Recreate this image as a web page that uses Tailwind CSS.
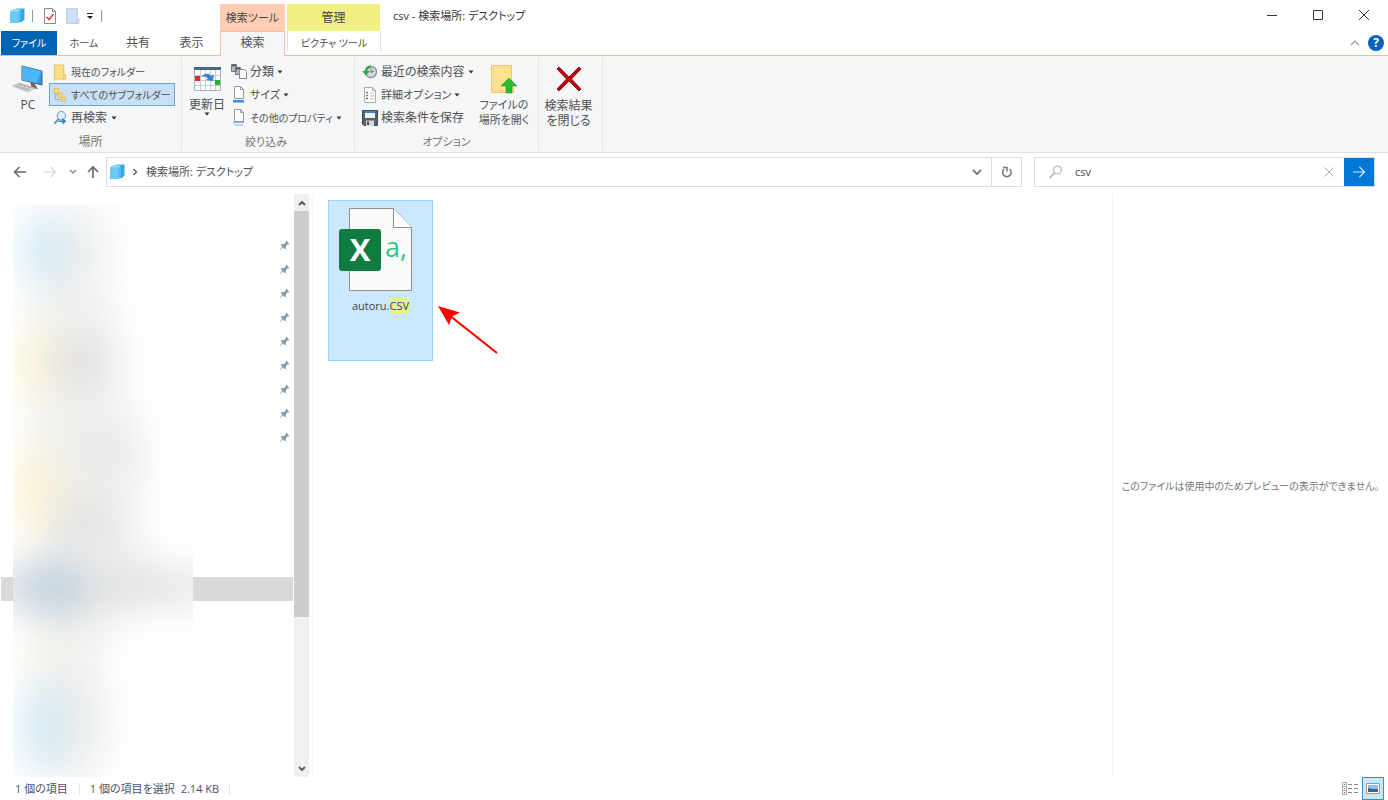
<!DOCTYPE html>
<html lang="ja">
<head>
<meta charset="utf-8">
<title>csv - 検索場所: デスクトップ</title>
<script src="https://cdn.jsdelivr.net/npm/@tailwindcss/browser@4"></script>
</head>
<body class="flex min-h-screen flex-col bg-white font-['Open_Sans','Noto_Sans_CJK_JP',sans-serif] text-[12px] leading-4 text-[#505050] [font-feature-settings:'palt'] whitespace-nowrap">
<svg width="0" height="0" class="absolute">
  <defs>
    <symbol id="stack" viewBox="0 0 16 16"><path d="M5 2 8 .5h7.500v11L13 14H5z" fill="#38a5dc"/><path d="M1 3.500 4 1.500h8v11L9.500 15H1z" fill="#4db8ec"/><path d="M1 3.500h8.500V15H1z" fill="#6cc8f5"/><path d="M1 3.500 4 1.500h8l-2.500 2z" fill="#9bdcfb"/></symbol>
    <symbol id="down" viewBox="0 0 6 4"><path d="M.5 .5h5L3 3.500z" fill="#333"/></symbol>
    <symbol id="pin" viewBox="0 0 12 12"><path d="M7 1.500 8 .8l3.200 3.200-.8.800-.9-.2-2.200 2.600.2 2.300-1 .7L4.400 8.100 1 11.200H.7v-.4L3.700 7.400 1.900 5.400l.8-1 2.200.2L7.300 2.600z" fill="#8a9ba9"/></symbol>
  </defs>
</svg>

<header class="shrink-0">
  <div class="flex h-[31px]">
    <div class="flex w-[220px] items-center pl-[9px]">
      <svg class="h-4 w-4"><use href="#stack"/></svg>
      <span class="ml-[7px] h-3 w-px bg-[#999]"></span>
      <button aria-label="プロパティ" class="ml-[11px]"><svg class="h-4 w-3" viewBox="0 0 12 16"><path d="M.5 .5h8l3 3v12H.5z" fill="#fff" stroke="#888"/><path d="M8.500 .5v3h3" fill="none" stroke="#888"/><path d="m2.500 9 2.500 2.500L9.500 6" fill="none" stroke="#e8402c" stroke-width="1.600"/></svg></button>
      <button aria-label="新しいフォルダー" class="ml-[10px]"><svg class="h-4 w-[14px]" viewBox="0 0 14 16"><path d="M.5 .5h11v9l1.500 1.500v4.500H.5z" fill="#d3dff2" stroke="#c2d0e6"/><path d="M10.500 11.500v4" stroke="#b5c5df"/></svg></button>
      <button aria-label="クイック アクセスのカスタマイズ" class="ml-[6px]"><svg class="h-2 w-2" viewBox="0 0 8 8"><path d="M1 1.500h6" stroke="#222"/><path d="M1 4h6L4 7z" fill="#222"/></svg></button>
      <span class="ml-[7px] h-3 w-px bg-[#999]"></span>
    </div>
    <div class="mt-1 mr-[2px] flex w-[65px] items-center justify-center bg-[#ffccb4] text-[11px] text-[#444]">検索ツール</div>
    <div class="mt-1 flex w-[93px] items-center justify-center bg-[#f0f082] text-[#444]">管理</div>
    <h1 class="ml-[13px] self-center text-[11px] text-[#333]">csv - 検索場所: デスクトップ</h1>
    <div class="ml-auto flex items-center gap-[34px] pr-[18px]">
      <button aria-label="最小化"><svg class="h-3 w-3" viewBox="0 0 12 12"><path d="M1 5.500h10" stroke="#333"/></svg></button>
      <button aria-label="最大化"><svg class="h-3 w-3" viewBox="0 0 12 12"><path d="M1.500 .5h9v9h-9z" fill="none" stroke="#333"/></svg></button>
      <button aria-label="閉じる"><svg class="h-3 w-3" viewBox="0 0 12 12"><path d="m1 0 10 10M11 0 1 10" stroke="#333"/></svg></button>
    </div>
  </div>
  <nav class="flex h-[25px] border-b border-[#f7b9a0] pl-px" aria-label="リボン タブ">
    <button class="h-6 w-14 bg-[#0063b1] text-[10px] text-white">ファイル</button>
    <button class="w-[54px] pb-px text-[10px]">ホーム</button>
    <button class="w-[54px] pb-px">共有</button>
    <button class="w-[53px] pb-px">表示</button>
    <button class="-mb-px ml-[2px] w-[65px] border-x border-t border-[#f7b9a0] bg-[#f5f6f7] pb-[2px]">検索</button>
    <button class="mb-1 ml-[2px] w-[94px] border-x border-[#ddd] pt-[3px] text-[10px]">ピクチャ ツール</button>
    <div class="ml-auto flex items-center gap-2 pr-1">
      <button aria-label="リボンの最小化"><svg class="h-2 w-[10px]" viewBox="0 0 10 8"><path d="m1 6 4-4 4 4" fill="none" stroke="#999" stroke-width="1.200"/></svg></button>
      <button aria-label="ヘルプ" class="flex h-4 w-4 items-center justify-center rounded-full bg-[#0b63b8] text-[12px] font-bold text-white">?</button>
    </div>
  </nav>
</header>

<section class="flex h-[97px] shrink-0 border-b border-[#dedfe0] bg-[#f5f6f7] py-[2px]" aria-label="検索リボン">
  <div class="flex w-[182px] flex-col border-r border-[#e2e3e4]">
    <div class="flex pt-[2px] pl-[10px]">
      <button class="flex w-[36px] flex-col items-center">
        <svg class="mt-[4px] h-[30px] w-[32px]" viewBox="0 0 32 30"><path d="M10 2 30 7v14L10 16z" fill="#2f9bf0" stroke="#555"/><path d="M10 2 30 7 24 19 10 16z" fill="#4cb4f8"/><path d="m18 18 2 6 6 1-4-6z" fill="#666"/><path d="m1 22 6-3 16 5-7 4z" fill="#d5d7d9" stroke="#aaa" stroke-width=".7"/><path d="m4 22 14 4M7 20l13 4M5 23l5-3M9 25l5-3M13 26l5-3" stroke="#999" stroke-width=".6"/></svg>
        <span class="mt-[3px]">PC</span>
      </button>
      <div class="ml-[3px] flex flex-1 flex-col pr-[6px] text-[10px]">
        <button class="flex h-[23px] items-center gap-1 border border-transparent pl-[3px]"><svg class="h-4 w-[14px]" viewBox="0 0 15 16"><path d="M1.500 .5h10v9l2 1.500v4.500h-12z" fill="#ffe08a" stroke="#e9bd55"/><path d="M11.500 11v4.500" stroke="#e9bd55"/></svg>現在のフォルダー</button>
        <button aria-pressed="true" class="flex h-[23px] items-center gap-1 border border-[#6ba4dd] bg-[#c9dff6] pl-[3px]"><svg class="h-4 w-[14px]" viewBox="0 0 15 16"><path d="M1 1h5v5H1zM6 6h4v4.500H6zM9.500 10.500h4V15h-4z" fill="#ffdc7c" stroke="#e2b349" stroke-width=".8"/><path d="M2.500 6v7h6M2.500 8h3" fill="none" stroke="#8f9fb0" stroke-width=".8"/></svg>すべてのサブフォルダー</button>
        <button class="flex h-[23px] items-center gap-1 border border-transparent pl-[3px] text-[12px]"><svg class="h-4 w-[14px]" viewBox="0 0 15 16"><circle cx="9" cy="5.500" r="4.500" fill="#dceefb" stroke="#6e8ba5"/><path d="m6 9-4.500 5" stroke="#6e8ba5" stroke-width="2"/><path d="M6 11.500h6M10 9l3 2.500-3 2.500" fill="none" stroke="#1d86dc" stroke-width="1.600"/></svg>再検索<svg class="h-1 w-[6px]"><use href="#down"/></svg></button>
      </div>
    </div>
    <div class="mt-auto text-center text-[#777]">場所</div>
  </div>

  <div class="flex w-[173px] flex-col border-r border-[#e2e3e4]">
    <div class="flex pt-[2px] pl-[6px]">
      <button class="flex w-[38px] flex-col items-center pt-[6px]">
        <svg class="h-[26px] w-[27px]" viewBox="0 0 27 26"><path d="M.5 1.500h26v23H.5z" fill="#fff" stroke="#aab4be"/><path d="M0 1h27v3H0z" fill="#4b6785"/><path d="M1 9.500h25M1 14.500h25M1 19.500h25M6.500 4v20M11.500 4v20M16.500 4v20M21.500 4v20" stroke="#c3ccd6"/><path d="M1 10h5v5H1z" fill="#e02d28"/><path d="M21 14h5v5h-5z" fill="#23b132"/><path d="M7 11c3-4 8-4.500 10-1l3-1.500-1 6.500-7-1 2-1.500c-2-2.500-4-2.500-7-1.500z" fill="#3a83c6"/></svg>
        <span class="mt-[5px]">更新日</span>
        <svg class="-mt-px h-1 w-[6px]"><use href="#down"/></svg>
      </button>
      <div class="ml-[5px] flex flex-col">
        <button class="flex h-[23px] items-center gap-[3px]"><svg class="h-[17px] w-4" viewBox="0 0 16 17"><path d="M.5 1.500h5v7h-5zM4.500 4.500h5v7h-5z" fill="#abc" stroke="#777"/><path d="M1 2.500h4M5 5.500h4" stroke="#555" stroke-width="1.500"/><path d="M8.500 6.500h5l2 2v7h-7z" fill="#fff" stroke="#888"/></svg>分類<svg class="h-1 w-[6px]"><use href="#down"/></svg></button>
        <button class="flex h-[23px] items-center gap-[3px] text-[11px]"><svg class="h-[17px] w-4" viewBox="0 0 16 17"><path d="M3.500 .5h6l3 3v9h-9z" fill="#fff" stroke="#999"/><path d="M9.500 .5v3h3" fill="none" stroke="#999"/><path d="M2 14h11v2.500H2z" fill="#3b8de0"/></svg>サイズ<svg class="h-1 w-[6px]"><use href="#down"/></svg></button>
        <button class="flex h-[23px] items-center gap-[3px] text-[10px]"><svg class="h-[17px] w-4" viewBox="0 0 16 17"><path d="M3.500 .5h6l3 3v9h-9z" fill="#fff" stroke="#999"/><path d="M9.500 .5v3h3" fill="none" stroke="#999"/><path d="M2 13.500h11M3 16h9" stroke="#8fb4dc"/></svg>その他のプロパティ<svg class="h-1 w-[6px]"><use href="#down"/></svg></button>
      </div>
    </div>
    <div class="mt-auto pr-1 text-center text-[11px] text-[#777]">絞り込み</div>
  </div>

  <div class="flex w-[184px] flex-col border-r border-[#e2e3e4]">
    <div class="flex pt-[2px] pl-[7px]">
      <div class="flex w-[115px] flex-col">
        <button class="flex h-[23px] items-center gap-[3px]"><svg class="h-4 w-4" viewBox="0 0 16 16"><circle cx="9" cy="8" r="5.500" fill="#d5dbde" stroke="#8b959c" stroke-width="1.400"/><path d="M9 5v3.500l3-1.500" fill="none" stroke="#667"/><path d="M9 1.500C5 1.500 3 4 2.800 7H0l4 4.500L8 7H5.300C5.500 5 7 4 9 4z" fill="#2fa84a"/></svg>最近の検索内容<svg class="h-1 w-[6px]"><use href="#down"/></svg></button>
        <button class="flex h-[23px] items-center gap-[3px] text-[11px]"><svg class="h-4 w-4" viewBox="0 0 16 16"><path d="M2.500 .5h8l3 3v12h-11z" fill="#fff" stroke="#aaa"/><path d="M10.500 .5v3h3" fill="none" stroke="#aaa"/><path d="M4 5.500h2M4 8.500h2M4 11.500h2" stroke="#777" stroke-width="1.500"/><path d="M8 6h4M8 9h4M8 12h4" stroke="#bbb"/></svg>詳細オプション<svg class="h-1 w-[6px]"><use href="#down"/></svg></button>
        <button class="flex h-[23px] items-center gap-[3px]"><svg class="h-4 w-4" viewBox="0 0 16 16"><path d="M.5 .5h15v15H2L.5 14z" fill="#596069" stroke="#454b53"/><path d="M3 1h10v7H3z" fill="#f4f7fa"/><path d="M3 1h10v2H3z" fill="#3589d5"/><path d="M4 10.500h8V16H4z" fill="#d5d8db"/><path d="M5 11.500h2V15H5z" fill="#454b53"/></svg>検索条件を保存</button>
      </div>
      <button class="flex w-[54px] flex-col items-center pt-[4px]">
        <svg class="h-[32px] w-7" viewBox="0 0 28 32"><path d="M1.500 1.500h20v21l2 1.500v4.500h-22z" fill="#ffe08e" stroke="#f0c868"/><path d="M19 14l8 8h-5v7h-6v-7h-5z" fill="#27bd2d" stroke="#1f9f25" stroke-width=".6"/></svg>
        <span class="mt-px text-[11px] leading-[15px]">ファイルの<br>場所を開く</span>
      </button>
    </div>
    <div class="mt-auto text-center text-[11px] text-[#777]">オプション</div>
  </div>

  <div class="w-16 border-r border-[#e2e3e4] pt-[6px]">
    <button class="flex w-full flex-col items-center pr-1">
      <svg class="h-[30px] w-7" viewBox="0 0 28 30"><path d="m2 5 2-2 10 10L24 3l2 2-9.500 10L26 25l-2 2-10-10L4 27l-2-2 9.500-10z" fill="#c00510" stroke="#8a1218"/></svg>
      <span class="mt-1 text-[12px] leading-[15px]">検索結果<br>を閉じる</span>
    </button>
  </div>
</section>

<div class="flex h-[41px] shrink-0 items-center px-[13px] pb-[3px]">
  <button aria-label="戻る" class="w-[14px]"><svg class="h-[14px] w-[14px]" viewBox="0 0 14 14"><path d="M13 7H2M6.500 2 1.500 7l5 5" fill="none" stroke="#666" stroke-width="1.500"/></svg></button>
  <button aria-label="進む" class="ml-4 w-[14px]"><svg class="h-[14px] w-[14px]" viewBox="0 0 14 14"><path d="M1 7h11M7.500 2l5 5-5 5" fill="none" stroke="#ddd" stroke-width="1.500"/></svg></button>
  <button aria-label="最近の場所" class="ml-3 w-2"><svg class="h-2 w-2" viewBox="0 0 8 8"><path d="m1 2 3 3 3-3" fill="none" stroke="#888" stroke-width="1.400"/></svg></button>
  <button aria-label="上へ" class="ml-[9px] w-[14px]"><svg class="h-[14px] w-[14px]" viewBox="0 0 14 14"><path d="M7 13V2M2 7l5-5 5 5" fill="none" stroke="#666" stroke-width="1.600"/></svg></button>
  <div class="ml-[6px] flex h-[30px] flex-1 items-center border border-[#dcdcdc] pl-[2px]">
    <svg class="h-4 w-4"><use href="#stack"/></svg>
    <svg class="ml-[7px] h-2 w-[6px]" viewBox="0 0 6 8"><path d="m1.500 1 3 3-3 3" fill="none" stroke="#555" stroke-width="1.300"/></svg>
    <a href="#" class="ml-2 text-[11px]">検索場所: デスクトップ</a>
    <button aria-label="以前の場所" class="mr-[9px] ml-auto"><svg class="h-[10px] w-[10px]" viewBox="0 0 10 10"><path d="m1 3 4 4 4-4" fill="none" stroke="#777" stroke-width="1.800"/></svg></button>
    <button aria-label="最新の情報に更新" class="flex h-full w-[30px] items-center justify-center border-l border-[#dcdcdc]"><svg class="h-3 w-3" viewBox="0 0 12 12"><path d="M8.500 3A4.300 4.300 0 1 1 3.300 3M2 1.500h4v4" fill="none" stroke="#777" stroke-width="1.500"/></svg></button>
  </div>
  <div class="ml-3 flex h-[30px] w-[341px] items-center border border-[#dcdcdc]">
    <svg class="ml-[14px] h-[14px] w-[14px]" viewBox="0 0 14 14"><circle cx="8.500" cy="5" r="4" fill="none" stroke="#aaa"/><path d="m5.500 8-5 5" stroke="#aaa" stroke-width="1.300"/></svg>
    <input type="text" value="csv" aria-label="検索" class="ml-3 min-w-0 flex-1 bg-transparent text-[11px] text-[#444] outline-none">
    <button aria-label="検索をクリア" class="mr-[10px]"><svg class="h-[10px] w-[10px]" viewBox="0 0 10 10"><path d="m.5 .5 9 9M9.500 .5l-9 9" stroke="#aaa"/></svg></button>
    <button aria-label="検索を実行" class="flex h-[28px] w-[30px] items-center justify-center bg-[#0078d7]"><svg class="h-3 w-[14px]" viewBox="0 0 14 12"><path d="M1 6h11M7.500 1l5 5-5 5" fill="none" stroke="#d5eaff" stroke-width="1.200"/></svg></button>
  </div>
</div>

<main class="flex flex-1">
  <aside class="relative w-[294px] shrink-0 pt-[39px]">
    <ul class="flex flex-col items-end pr-1" aria-label="クイック アクセス">
      <li class="flex h-6 items-center"><svg class="h-[11px] w-[11px]"><use href="#pin"/></svg></li>
      <li class="flex h-6 items-center"><svg class="h-[11px] w-[11px]"><use href="#pin"/></svg></li>
      <li class="flex h-6 items-center"><svg class="h-[11px] w-[11px]"><use href="#pin"/></svg></li>
      <li class="flex h-6 items-center"><svg class="h-[11px] w-[11px]"><use href="#pin"/></svg></li>
      <li class="flex h-6 items-center"><svg class="h-[11px] w-[11px]"><use href="#pin"/></svg></li>
      <li class="flex h-6 items-center"><svg class="h-[11px] w-[11px]"><use href="#pin"/></svg></li>
      <li class="flex h-6 items-center"><svg class="h-[11px] w-[11px]"><use href="#pin"/></svg></li>
      <li class="flex h-6 items-center"><svg class="h-[11px] w-[11px]"><use href="#pin"/></svg></li>
      <li class="flex h-6 items-center"><svg class="h-[11px] w-[11px]"><use href="#pin"/></svg></li>
    </ul>
    <div class="mt-32 mr-px ml-px h-6 bg-[#d9d9d9]"></div>
    <svg class="absolute top-[11px] left-[13px] h-[572px] w-[180px] bg-white" viewBox="0 0 180 572">
      <defs>
        <filter id="soft" x="-50%" y="-50%" width="200%" height="200%" color-interpolation-filters="sRGB"><feGaussianBlur stdDeviation="19"/></filter>
      </defs>
      <g filter="url(#soft)">
        <path d="M20 5h75v90l15 40v50l20 50v50l-5 50 35 40v20l-60 20-15 40 10 50-10 70H20z" fill="#efefed"/>
        <ellipse cx="32" cy="45" rx="24" ry="36" fill="#d3eaf6"/>
        <ellipse cx="22" cy="158" rx="18" ry="38" fill="#fbf3d2"/>
        <ellipse cx="68" cy="157" rx="25" ry="24" fill="#dededf"/>
        <ellipse cx="95" cy="245" rx="35" ry="16" fill="#e7e7e6"/>
        <ellipse cx="22" cy="285" rx="18" ry="50" fill="#fbf1cf"/>
        <ellipse cx="72" cy="318" rx="26" ry="24" fill="#e0e0e0"/>
        <path d="M-40 372h260v22H-40z" fill="#d9d9d8"/>
        <ellipse cx="38" cy="383" rx="38" ry="24" fill="#bccddd"/>
        <ellipse cx="24" cy="450" rx="14" ry="14" fill="#faf4e2"/>
        <ellipse cx="30" cy="522" rx="22" ry="48" fill="#d2e9f4"/>
        <ellipse cx="75" cy="515" rx="22" ry="25" fill="#ebebea"/>
      </g>
    </svg>
  </aside>
  <div class="flex w-[15px] shrink-0 flex-col bg-[#f0f0f0]" aria-hidden="true">
    <div class="flex h-[17px] items-center justify-center"><svg class="h-2 w-2" viewBox="0 0 8 8"><path d="m1 6 3-3 3 3" fill="none" stroke="#555" stroke-width="1.800"/></svg></div>
    <div class="grow-[406] bg-[#cdcdcd]"></div>
    <div class="grow-[143]"></div>
    <div class="flex h-[17px] items-center justify-center"><svg class="h-2 w-2" viewBox="0 0 8 8"><path d="m1 2 3 3 3-3" fill="none" stroke="#555" stroke-width="1.800"/></svg></div>
  </div>
  <section class="relative ml-[3px] flex-1 border-l border-[#f5f5f5] pt-[6px] pl-[15px]" aria-label="ファイル一覧">
    <button class="flex h-[161px] w-[105px] flex-col items-center border border-[#99d1ff] bg-[#cce8ff]">
      <svg class="mt-[7px] h-[86px] w-[84px]" viewBox="6 0 84 86">
        <path d="M16.500 .5h44l18 19v63h-62z" fill="#fafafa" stroke="#8d8d8d"/>
        <path d="M60.500 .5v19h18" fill="#fff" stroke="#8d8d8d"/>
        <text x="52" y="49" font-family="Open Sans" font-size="27" fill="#33c481">a,</text>
        <rect x="6" y="21" width="42" height="42" rx="3" fill="#107c41"/>
        <text x="27" y="53" text-anchor="middle" font-family="Open Sans" font-weight="700" font-size="31" fill="#fff">X</text>
      </svg>
      <span class="mt-1 text-[11px] text-[#444]">autoru.<mark class="rounded-[3px] bg-[#e0f0a0] text-[#444] ring-1 ring-[#f0f36c] ring-inset">CSV</mark></span>
    </button>
    <svg class="absolute top-[110px] left-[124px] h-[52px] w-[62px]" viewBox="0 0 62 52"><path d="m12 11 48 38" stroke="#fe0000" stroke-width="2.200"/><path d="M1 2 23 8.500l-8 4L12 21z" fill="#fe0000"/></svg>
  </section>
  <aside class="flex w-[276px] shrink-0 items-center justify-center border-l border-[#f2f2f2] text-[10px] text-[#777]" aria-label="プレビュー">このファイルは使用中のためプレビューの表示ができません。</aside>
</main>

<footer class="flex h-[23px] shrink-0 items-center pr-1 pl-[15px] text-[11px] text-[#44546f]">
  <span>1 個の項目</span>
  <span class="ml-[11px] h-3 w-px bg-[#e8e8e8]"></span>
  <span class="ml-[10px]">1 個の項目を選択</span>
  <span class="ml-[6px]">2.14 KB</span>
  <span class="ml-[10px] h-3 w-px bg-[#e8e8e8]"></span>
  <div class="ml-auto flex items-center gap-1">
    <button aria-label="詳細表示"><svg class="h-[14px] w-4" viewBox="0 0 16 14"><path d="M.5 .5h4v12h-4zM.5 4.500h4M.5 8.500h4" fill="#fff" stroke="#aaa"/><path d="M2 2.500h1" stroke="#555"/><path d="M2 6.500h1" stroke="#39e"/><path d="M2 10.500h1" stroke="#e33"/><path d="M6 2.500h4M12 2.500h4M6 6.500h4M12 6.500h4M6 10.500h4M12 10.500h4" stroke="#888"/></svg></button>
    <button aria-label="大アイコン表示" aria-pressed="true" class="flex h-[23px] w-[22px] items-center justify-center border border-[#2c95dd] bg-[#cce8f8]"><svg class="h-[11px] w-[14px]" viewBox="0 0 14 11"><path d="M.5 .5h13v10H.5z" fill="#fff" stroke="#999"/><path d="M2 2h10v7H2z" fill="#8cc3ef"/><path d="m2 5 4 1 6 0v3H2z" fill="#3d6584"/></svg></button>
  </div>
</footer>
</body>
</html>
